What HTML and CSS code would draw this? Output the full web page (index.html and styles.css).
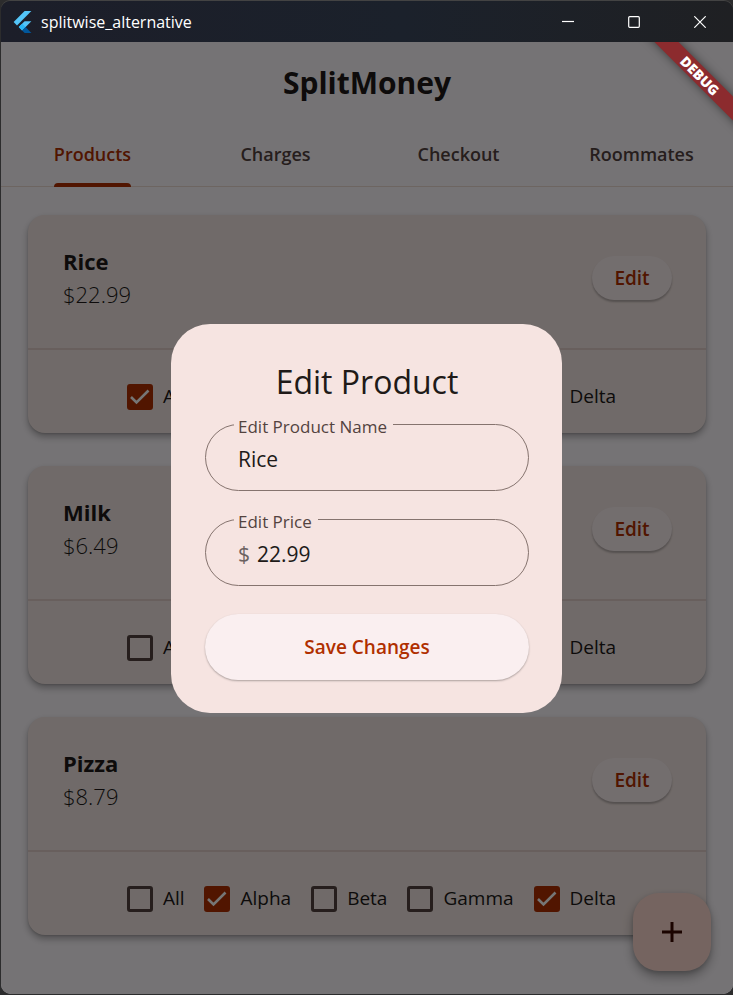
FILE: index.html
```html
<!DOCTYPE html>
<html lang="en">
<head>
<meta charset="utf-8">
<meta name="viewport" content="width=device-width, initial-scale=1">
<title>splitwise_alternative</title>
<link rel="stylesheet" href="styles.css">
</head>
<body>
<div class="window">
  <header class="titlebar">
    <svg class="logo" viewBox="2 0 20 24" aria-hidden="true">
      <path fill="#54c5f8" d="M14.3 0 2.3 12 6 15.7 21.7 0z"/>
      <path fill="#54c5f8" d="M14.3 11.1 7.9 17.5l3.7 3.7L21.7 11.1z"/>
      <path fill="#29b6f6" d="m7.9 17.5 3.7-3.7 3.7 3.7-3.7 3.7z"/>
      <path fill="#01579b" d="m11.6 21.2 3.7-3.7 6.4 6.5h-7.4z"/>
    </svg>
    <span class="window-name">splitwise_alternative</span>
    <button class="window-button" aria-label="Minimize"><svg viewBox="0 0 12 12"><path d="M0 5.5h12"/></svg></button>
    <button class="window-button" aria-label="Maximize"><svg viewBox="0 0 12 12"><rect x=".7" y=".7" width="10.6" height="10.6" rx="1"/></svg></button>
    <button class="window-button" aria-label="Close"><svg viewBox="0 0 12 12"><path d="m.3.3 11.4 11.4M11.7.3.3 11.7"/></svg></button>
  </header>

  <div class="app">
    <h1 class="app-title">SplitMoney</h1>
    <nav class="tabs">
      <a class="tab active" href="#products"><span>Products</span></a>
      <a class="tab" href="#charges"><span>Charges</span></a>
      <a class="tab" href="#checkout"><span>Checkout</span></a>
      <a class="tab" href="#roommates"><span>Roommates</span></a>
    </nav>

    <main class="products" id="products">
      <article class="card">
        <div class="summary">
          <div><h2 class="name">Rice</h2><p class="price">$22.99</p></div>
          <button class="edit">Edit</button>
        </div>
        <div class="people">
          <label><input type="checkbox" checked>All</label>
          <label><input type="checkbox" checked>Alpha</label>
          <label><input type="checkbox" checked>Beta</label>
          <label><input type="checkbox" checked>Gamma</label>
          <label><input type="checkbox" checked>Delta</label>
        </div>
      </article>
      <article class="card">
        <div class="summary">
          <div><h2 class="name">Milk</h2><p class="price">$6.49</p></div>
          <button class="edit">Edit</button>
        </div>
        <div class="people">
          <label><input type="checkbox">All</label>
          <label><input type="checkbox">Alpha</label>
          <label><input type="checkbox">Beta</label>
          <label><input type="checkbox">Gamma</label>
          <label><input type="checkbox">Delta</label>
        </div>
      </article>
      <article class="card">
        <div class="summary">
          <div><h2 class="name">Pizza</h2><p class="price">$8.79</p></div>
          <button class="edit">Edit</button>
        </div>
        <div class="people">
          <label><input type="checkbox">All</label>
          <label><input type="checkbox" checked>Alpha</label>
          <label><input type="checkbox">Beta</label>
          <label><input type="checkbox">Gamma</label>
          <label><input type="checkbox" checked>Delta</label>
        </div>
      </article>
    </main>

    <button class="add" aria-label="Add product"><svg viewBox="0 0 20 20"><path d="M10 0v20M0 10h20"/></svg></button>

    <div class="scrim">
      <form class="dialog" role="dialog" aria-labelledby="dialog-title">
        <h2 class="dialog-title" id="dialog-title">Edit Product</h2>
        <div class="field">
          <label for="product-name">Edit Product Name</label>
          <input id="product-name" type="text" value="Rice">
        </div>
        <div class="field">
          <label for="product-price">Edit Price</label>
          <span class="prefix">$</span>
          <input id="product-price" type="text" value="22.99">
        </div>
        <button class="save" type="button">Save Changes</button>
      </form>
    </div>

    <div class="banner"><span>DEBUG</span></div>
  </div>
</div>
</body>
</html>
```
FILE: styles.css
```css
:root {
  --primary: #b02f00;
  --surface: #fffbff;
  --ink: #201a18;
  --ink-soft: #53433f;
  --outline: #85736e;
  --divider: #e3d0ca;
}

* { box-sizing: border-box; }

body {
  margin: 0;
  background: #2c2c2d;
  font-family: "Open Sans", "Noto Sans", sans-serif;
  color: var(--ink);
}

h1, h2, p { margin: 0; }
button, input { font: inherit; color: inherit; }
button { border: 0; padding: 0; }

.window {
  display: flex;
  flex-direction: column;
  min-height: 100vh;
  padding: 1px 0 1px 1px;
  border-radius: 10px;
}

.titlebar {
  display: flex;
  align-items: center;
  height: 41px;
  padding-left: 12px;
  border-radius: 9px 9px 0 0;
  box-shadow: 0 -1px 0 #434343;
  background: linear-gradient(90deg, #1c1e29, #1b212b 55%, #1f2023);
  color: #fff;
}

.logo { width: 19px; height: 22px; }

.window-name {
  flex: 1;
  margin-left: 9px;
  font-size: 16px;
  line-height: 24px;
}

.window-button {
  display: grid;
  place-items: center;
  width: 66px;
  height: 41px;
  background: none;
}

.window-button svg {
  width: 12px;
  height: 12px;
  fill: none;
  stroke: #fff;
  stroke-width: 1.2;
}

.app {
  position: relative;
  flex: 1;
  overflow: hidden;
  border-radius: 0 0 10px 10px;
  background: var(--surface);
}

.app-title {
  padding-top: 20px;
  font-size: 30px;
  line-height: 42px;
  font-weight: 700;
  text-align: center;
}

.tabs {
  display: grid;
  grid-template-columns: repeat(4, 1fr);
  margin-top: 18px;
  height: 65px;
  border-bottom: 1px solid #eddcd4;
}

.tab {
  display: flex;
  justify-content: center;
  height: 65px;
  color: var(--ink-soft);
  font-size: 18px;
  line-height: 64px;
  font-weight: 600;
  text-decoration: none;
}

.tab.active { color: var(--primary); }

.tab.active span::after {
  content: "";
  display: block;
  height: 4px;
  margin-top: -3px;
  border-radius: 4px 4px 0 0;
  background: var(--primary);
}

.products {
  display: grid;
  gap: 33px;
  padding: 28px 27px;
}

.card {
  border-radius: 17px;
  background: #f4e7e4;
  box-shadow: 0 4px 7px rgba(0, 0, 0, .3), 0 1px 2px rgba(0, 0, 0, .12);
}

.summary {
  display: flex;
  align-items: center;
  justify-content: space-between;
  padding: 30px 34px 37px 35px;
  border-bottom: 2px solid var(--divider);
}

.name, .price { font-size: 22px; line-height: 33px; }
.name { font-weight: 700; }
.price { font-weight: 300; }

.edit {
  width: 80px;
  height: 44px;
  border-radius: 22px;
  background: #faeff0;
  box-shadow: 0 2px 2px rgba(0, 0, 0, .25);
  color: var(--primary);
  font-size: 19px;
  font-weight: 600;
}

.people {
  display: flex;
  justify-content: center;
  gap: 20px;
  padding: 31px 0 21px 9px;
}

.people label {
  display: flex;
  align-items: center;
  gap: 10px;
  font-size: 19px;
  line-height: 31px;
}

.people input {
  appearance: none;
  width: 26px;
  height: 26px;
  margin: 0;
  border: 3px solid var(--ink-soft);
  border-radius: 3px;
}

.people input:checked {
  border-color: var(--primary);
  background: var(--primary) url("data:image/svg+xml,%3Csvg xmlns='http://www.w3.org/2000/svg' viewBox='0 0 20 20'%3E%3Cpath d='M1 10l5.5 5.5L18.500 3.500' fill='none' stroke='white' stroke-width='2.600'/%3E%3C/svg%3E") center / 20px 20px;
}

.add {
  position: absolute;
  right: 22px;
  bottom: 23px;
  display: grid;
  place-items: center;
  width: 78px;
  height: 78px;
  border-radius: 26px;
  background: #ffdbd1;
  box-shadow: 0 6px 11px rgba(0, 0, 0, .3), 0 2px 4px rgba(0, 0, 0, .15);
}

.add svg {
  width: 20px;
  height: 20px;
  stroke: #3b0900;
  stroke-width: 3;
}

.scrim {
  position: absolute;
  inset: 0;
  display: grid;
  place-items: center;
  padding-right: 1px;
  background: rgba(0, 0, 0, .54);
}

.dialog {
  display: flex;
  flex-direction: column;
  width: min(391px, 90%);
  padding: 34px 33px 33px 34px;
  border-radius: 39px;
  background: #f6e4e1;
}

.dialog-title {
  margin-bottom: 18px;
  font-size: 32px;
  line-height: 48px;
  font-weight: 400;
  text-align: center;
}

.field {
  position: relative;
  display: flex;
  align-items: center;
  gap: 7px;
  height: 67px;
  margin-bottom: 28px;
  padding: 3px 33px 0 32px;
  border: 1px solid var(--outline);
  border-radius: 34px;
  font-size: 21px;
}

.field label {
  position: absolute;
  top: -10px;
  left: 28px;
  padding: 0 6px 0 4px;
  background: #f6e4e1;
  color: var(--ink-soft);
  font-size: 17px;
  line-height: 24px;
}

.prefix { color: #6b6160; }

.field input {
  flex: 1;
  min-width: 0;
  padding: 0;
  border: 0;
  outline: 0;
  background: none;
}

.save {
  height: 66px;
  border-radius: 33px;
  background: #faeff0;
  box-shadow: 0 1px 2px rgba(0, 0, 0, .3);
  color: var(--primary);
  font-size: 19px;
  font-weight: 600;
}

.banner {
  position: absolute;
  top: 0;
  right: 0;
  width: 100px;
  height: 100px;
  overflow: hidden;
}

.banner span {
  display: block;
  width: 180px;
  margin: 25px 0 0 -23px;
  transform: rotate(45deg);
  background: #8c2b2e;
  box-shadow: 0 0 10px rgba(0, 0, 0, .5);
  color: #fff;
  font-size: 14px;
  line-height: 17px;
  font-weight: 800;
  text-align: center;
}
```
